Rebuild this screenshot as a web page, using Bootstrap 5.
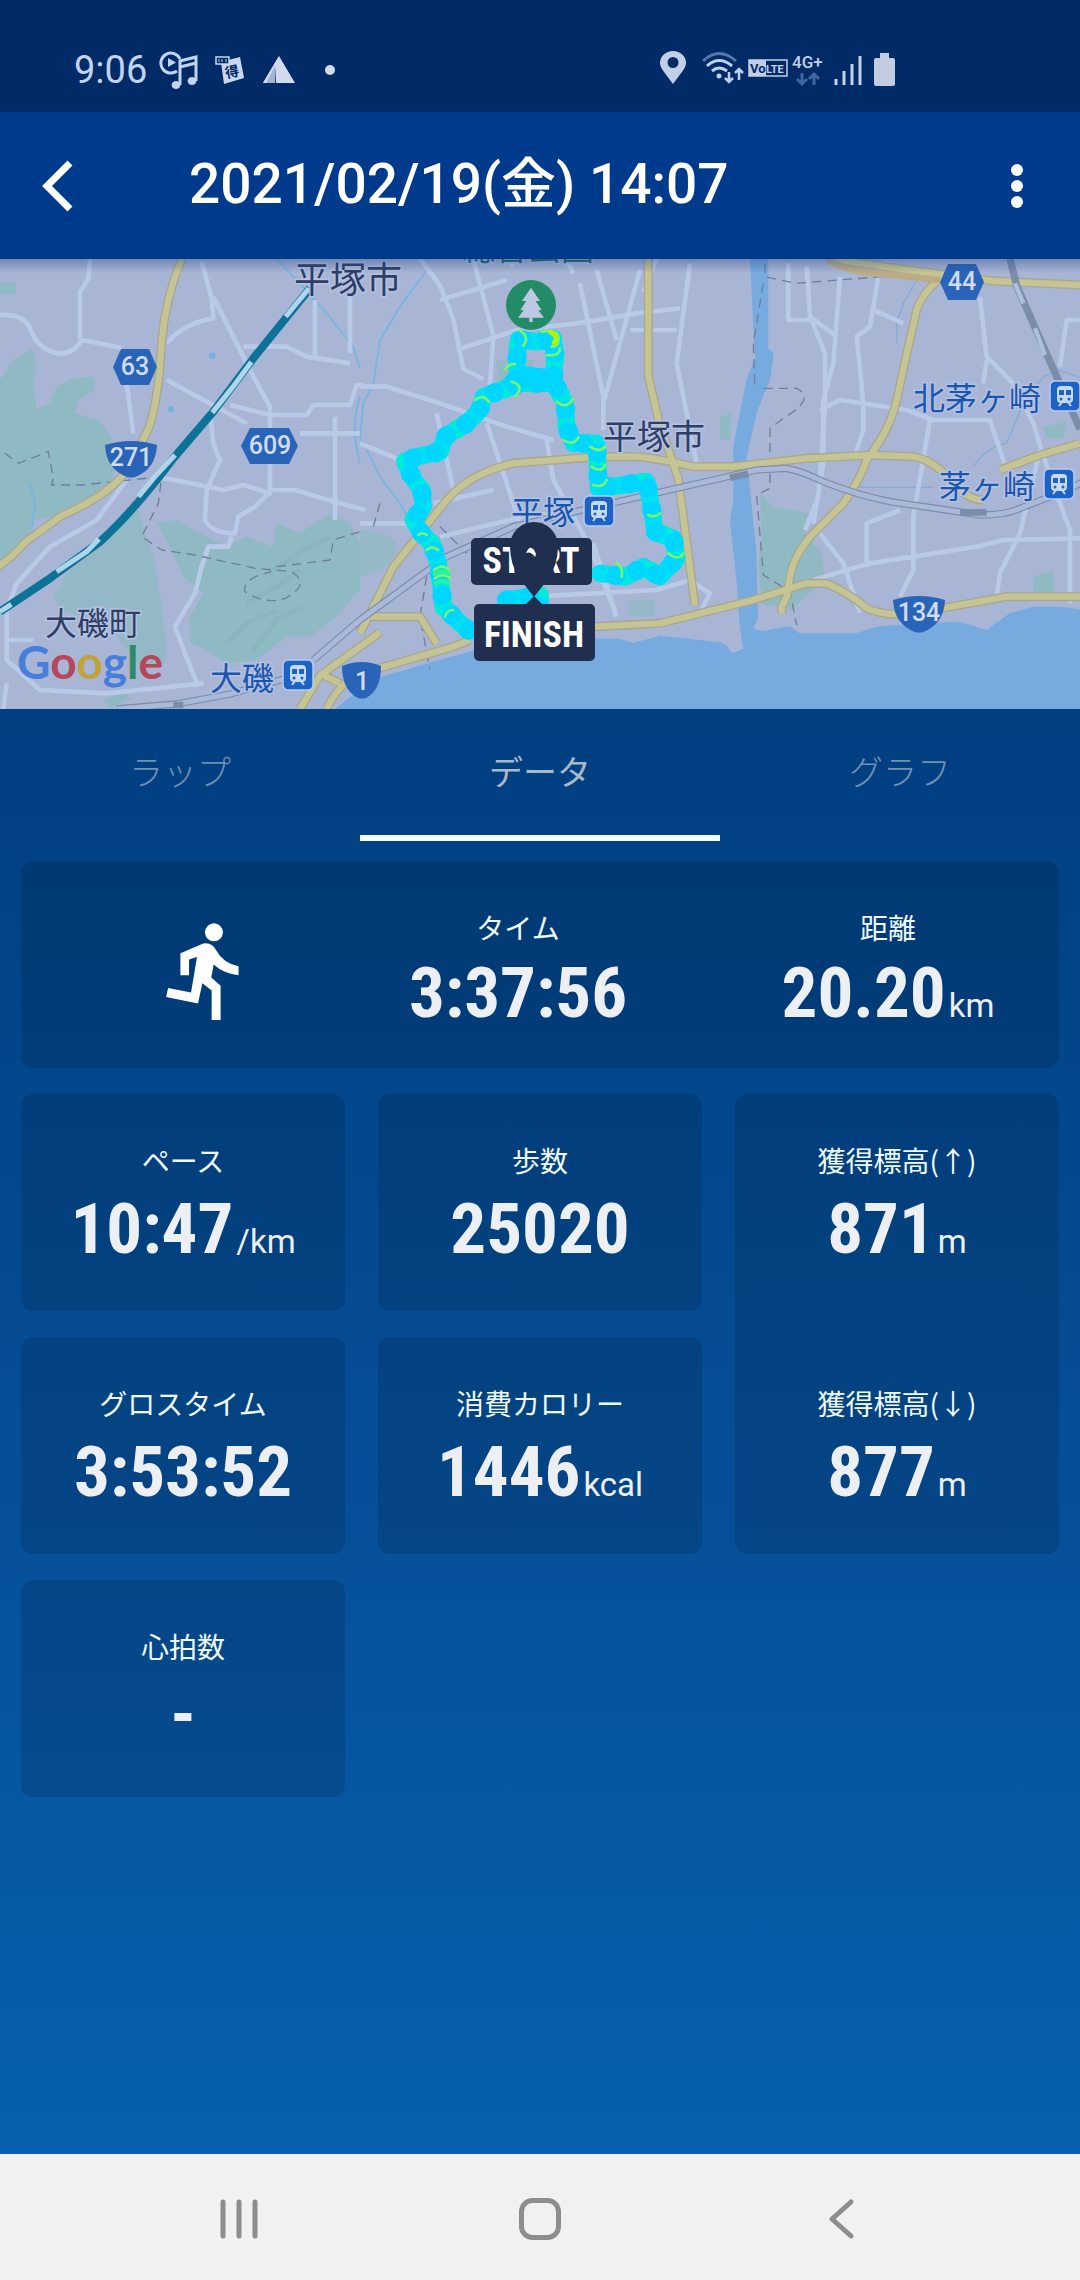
<!DOCTYPE html>
<html lang="ja">
<head>
<meta charset="utf-8">
<meta name="viewport" content="width=device-width, initial-scale=1">
<title>2021/02/19(金) 14:07</title>
<link rel="stylesheet" href="https://cdn.jsdelivr.net/npm/bootstrap@5.3.0/dist/css/bootstrap.min.css">
<style>
  :root { --num-font: "Roboto Condensed", Roboto, "Liberation Sans Narrow", sans-serif; }
  body { font-family: Roboto, "Noto Sans CJK JP", sans-serif; background: #075fae; color: #fff; }
  svg { display: block; }
  .app { min-height: 100vh; background: linear-gradient(#003f80 709px, #064f98 1500px, #0760ae 2154px); }
  .status-bar { height: 112px; padding: 48px 185px 0 74px; background: #002b66; color: #c3d3f2; }
  .clock { font-size: 38px; line-height: 44px; }
  .gap-before { margin-left: 12px; }
  .app-bar { height: 147px; padding: 0 42px; background: #003a8c; }
  .app-title { font-size: 55px; line-height: 72px; font-weight: 500; margin: 0 0 4px 116px; }
  .icon-btn { background: none; border: 0; padding: 0; color: inherit; }
  .route-map { height: 450px; overflow: hidden; background: #a8b5d5; }
  .route-map svg { width: 100%; height: 100%; }
  .road-sign { font: 500 25px Roboto, sans-serif; fill: #cfdcf4; text-anchor: middle; }
  .place { font-family: "Noto Sans CJK JP", sans-serif; fill: #303e63; stroke: #b4c2e4; stroke-width: 3px; paint-order: stroke; }
  .station { fill: #1a56ad; }
  .pin-label { font: 700 36px var(--num-font); font-stretch: condensed; fill: #fff; text-anchor: middle; }
  .tabs { height: 132px; }
  .tabs .nav-link { height: 132px; padding: 0 0 4px; background: none; border: 0; border-bottom: 6px solid transparent; border-radius: 0; font-size: 34px; font-weight: 300; color: #7190b3; font-family: "Noto Sans CJK JP", sans-serif; }
  .tabs .nav-link.active { color: #a9b8c9; border-bottom-color: #f4fcff; font-weight: 400; }
  .panels { display: grid; grid-template-columns: repeat(3, 1fr); gap: 26px 33px; padding: 20px 21px; }
  .panel { background: rgba(0, 16, 24, .15); border-radius: 12px; min-height: 217px; text-align: center; }
  .summary { grid-column: 1 / -1; min-height: 207px; display: grid; grid-template-columns: 362fr 270fr 406fr; }
  .summary .runner { padding-top: 61px; }
  .summary .distance { padding-left: 64px; }
  .elevation { grid-column: 3; grid-row: 2 / span 2; display: grid; grid-template-rows: 243px 1fr; }
  .metric { padding-top: 48px; }
  .metric dt { font: 400 28px/36px "Noto Sans CJK JP", sans-serif; color: #f0fbff; margin-bottom: 12px; }
  .panel.metric dt, .elevation dt { margin-bottom: 15px; }
  .metric dd { font: 700 71px/72px var(--num-font); font-stretch: condensed; color: #eceff4; margin: 0; }
  .unit { font: 400 33px Roboto, sans-serif; margin-left: 3px; }
  .system-nav { height: 126px; padding: 4px 88px 0; background: #f1f1f1; color: #8d8d8d; }
</style>
<script src="https://cdn.jsdelivr.net/npm/bootstrap@5.3.0/dist/js/bootstrap.bundle.min.js"></script>
</head>
<body>
<div class="app d-flex flex-column">
  <div class="status-bar d-flex align-items-start justify-content-between">
    <div class="d-flex align-items-center">
      <span class="clock">9:06</span>
      <svg class="gap-before" width="40" height="40" viewBox="0 0 40 40" fill="none" stroke="currentColor" stroke-width="3"><path d="M18 21A10 10 0 1 1 21 9"/><path d="M9 8l8 4.500-8 4.500z" fill="currentColor" stroke="none"/><path d="M21 35V11l16-4v24M21 17l16-4" /><ellipse cx="17" cy="35" rx="4" ry="3.500" fill="currentColor" stroke-width="1"/><ellipse cx="33" cy="31" rx="4" ry="3.500" fill="currentColor" stroke-width="1"/></svg>
      <svg class="ms-3" width="30" height="30" viewBox="0 0 30 30"><path d="M6 7l19-5 4 21-20 6z" fill="#cbd6ec"/><path d="M1 2h13v7H1z" fill="#002b66" stroke="#cbd6ec" stroke-width="1.500"/><path d="M4 4v3M7 4v3M11 4v3" stroke="#cbd6ec"/><text x="17" y="22" font-size="14" font-weight="700" font-family="Noto Sans CJK JP, sans-serif" text-anchor="middle" fill="#002b66" transform="rotate(-12 17 17)">得</text></svg>
      <svg class="ms-3" width="36" height="34" viewBox="0 0 36 34"><path d="M18 3l16 27H15l-1-17L6 30H2z" fill="#d2dbed"/><path d="M18 3L2 30h4l8-17z" fill="#d2dbed"/><path d="M5 30l9-17v17z" fill="#a4b5d4"/></svg>
      <svg class="ms-4" width="16" height="12" viewBox="0 0 16 12"><circle cx="9" cy="6" r="5" fill="#d2dbed"/></svg>
    </div>
    <div class="d-flex align-items-center">
      <svg width="26" height="44" viewBox="0 5 26 44"><path d="M13 41C5 30 0 25 0 20a13 12 0 0 1 26 0c0 5-5 10-13 21zM13 14a5 5 0 1 0 0 11 5 5 0 0 0 0-11z" fill="#c3cfe6" fill-rule="evenodd"/></svg>
      <svg class="ms-3" width="42" height="44" viewBox="0 5 42 44" fill="none" stroke="#bdd0f0" stroke-width="3"><path d="M1 18q16-15 33 0" stroke="#5776a9"/><path d="M5 23q12-11 25 0M10 28q7-6 15 0"/><circle cx="17" cy="33" r="2.500" fill="#bdd0f0" stroke="none"/><path d="M27 29v10m-4-4l4 4 4-4M37 37V26m-4 4l4-4 4 4" stroke-width="2.500"/></svg>
      <svg class="ms-1" width="40" height="44" viewBox="0 5 40 44"><rect x="1" y="17" width="38" height="16" fill="none" stroke="#c3cfe6" stroke-width="1.500"/><path d="M1 17h17v16H1z" fill="#c3cfe6"/><text x="2" y="30" font-family="Roboto, sans-serif" font-size="13" font-weight="700" fill="#002b66">Vo</text><text x="18" y="30" font-family="Roboto, sans-serif" font-size="11" font-weight="700" fill="#c3cfe6">LTE</text></svg>
      <svg class="ms-1" width="34" height="44" viewBox="0 5 34 44"><text x="0" y="25" font-family="Roboto, sans-serif" font-size="17" font-weight="500" fill="#c3cfe6">4G+</text><path d="M10 30v11m-5-5l5 5 5-5M22 42V31m-5 5l5-5 5 5" fill="none" stroke="#42659b" stroke-width="3"/></svg>
      <svg class="ms-2" width="28" height="44" viewBox="0 5 28 44" fill="none" stroke="#c3d0ea" stroke-width="3"><path d="M2 36v6M10 28v14M18 21v21M26 13v29"/></svg>
      <svg class="gap-before" width="21" height="44" viewBox="0 5 21 44"><path d="M6 10h9v5h4q2 0 2 2v24q0 2-2 2H2q-2 0-2-2V17q0-2 2-2h4z" fill="#c3cbe0"/></svg>
    </div>
  </div>

  <header class="app-bar d-flex align-items-center">
    <button class="icon-btn" type="button" aria-label="戻る"><svg width="31" height="52" viewBox="0 0 31 52" fill="none" stroke="currentColor" stroke-width="7"><path d="M28 3L5 26l23 23"/></svg></button>
    <h1 class="app-title">2021/02/19(金) 14:07</h1>
    <button class="icon-btn ms-auto" type="button" aria-label="メニュー"><svg width="42" height="52" viewBox="0 0 42 52" fill="currentColor"><circle cx="21" cy="10" r="6"/><circle cx="21" cy="26" r="6"/><circle cx="21" cy="42" r="6"/></svg></button>
  </header>

  <section class="route-map" aria-label="ルート">
    <svg viewBox="0 0 1080 450" preserveAspectRatio="xMidYMid slice">
      <defs>
        <linearGradient id="topShade" x2="0" y2="1"><stop stop-color="#24427e" stop-opacity=".4"/><stop offset="1" stop-color="#24427e" stop-opacity="0"/></linearGradient>
        <g id="train"><rect width="30" height="30" rx="5" fill="#1e62c6" stroke="#b4cdf5" stroke-width="1.500"/><rect x="7" y="5" width="16" height="17" rx="4" fill="#c6daf8"/><path d="M9 9h5v5H9zM16 9h5v5h-5z" fill="#1e62c6"/><circle cx="11" cy="18" r="1.500" fill="#1e62c6"/><circle cx="19" cy="18" r="1.500" fill="#1e62c6"/><path d="M9 25l3-4M21 25l-3-4" stroke="#c6daf8" stroke-width="2"/></g>
        <path id="yellowRoads" d="M545 27q-50 120-60 250-10 180-40 260l-60 120q-60 80-200 140l-110 80q-50 60-125 100M3240 105l-260-12-270-35-210-31M2840 70q-70 50-90 110-30 130-60 270-20 90-90 180-20 60-70 130l-100 100q-50 60-60 120l-10 60-15 30v20M1945 27v350l30 130 60 180 50 380M1080 1150l100-200 160-200q70-80 200-110l250-20h130q80 10 160 30h120l220-25 200-10 120 5q60 10 110 70t100 60M3000 660l120-45 120-35M1090 1100h170l50 80M1120 1260l240-70 50-20M1780 1130l200-10 280-70 160-50h60q70 30 120 75 60 25 140 15l280-50h220M900 1377l60-100 180-130M960 1270l60 30M980 1377q30-60 60-80"/>
        <path id="track" d="M440 1050l100-15v40M325 1140l-35-30-40-40-8-70-7-60-20-60-30-30-25-40 30-40-5-50-30-40-20-45 35-15 70-15 15-45 65-40 40-40 10-40 70-25 40-15h105l30 60 5 70 20 50h70l3 70 2 65 145-20 15 80 10 70 55 20 10 60-50 55-50-30-50 30-80-10M475 390l-5-50 5-72 55 7 50-10 5 55-5 70z"/>
      </defs>
      <!-- terrain and roads share a grid three times as fine as the label grid -->
      <g transform="translate(0 -9) scale(.33333)" fill="none" stroke-linejoin="round">
        <g fill="#90bac3">
          <path d="M0 95h48v38H0zM0 390l40-60 55-35 15 40-10 70 10 70 40-15 20-50 50-25 60-5 5 40-50 30-10 40 70 20 40 50-10 70 20 20-10 40-70 50-70 50-90 20-20 50-45 60-40 25z"/>
          <path d="M230 930l80-60 60-60 45-30 20 70 25 60 20 120 20 160-10 60-60 10-50-60-40-60-60-30-100-30-20-40z" opacity=".85"/>
          <path d="M470 820l60-10 90 50 60 30 60-30 80 30 10-70 70 30 90-60 60 30 30 60 0 140-70 80-80 60-70 0-90 70-90 10-60-40-50-20 0-80 40-70-60-50-40-90zM310 1350l60-25 20 20-60 30z"/>
          <path d="M1080 840q80 0 110 40-10 60-50 80l-60 20zM1885 1050h80v50h-80zM1490 330h110v60h-110z" opacity=".8"/>
          <path d="M2280 730l40 40 110 20-15 60 50 60 10 80-60 50-40 40-90-20-10-120 10-80zM2160 500l35-10-5 80h-30zM3100 980l60-20v70h-60zM3130 530l70-15-10 50h-50z"/>
        </g>
        <path d="M680 1180l60-60 90-40M760 1200l70-90 80-40M740 1060l90-50 70-50M820 960l90-60 80-40" stroke="#83afb8" stroke-width="14" opacity=".5"/>
        <path d="M2250 27h55v270l16 12-10 76-40 100-32 140 10 80 20 200 5 200-15 30 30 8 80-15 30 22h170l60-20 70-5 180-10 80 25 70-50 70-20h80l80 10v297H1005l75-60 60-35 170-50 110-30 360-37 80 2 40 12 80-22 180 20 40 20 30 0-10-60-10-140-20-180 10-70v-160l40-200 25-60z" fill="#77aadf"/>
        <path d="M2188 1170h30l4 30-25 10-15-20z" fill="#a8b5d5"/>
        <path d="M830 27l90 95 70 80 70 90 20 60M1280 60l-80 110-60 100-20 130-30 60-10 100 60 120 60 80 50 90M1080 440q-30 90 0 200M90 700l15 60-10 80" stroke="#7db4df" stroke-width="6"/>
        <path d="M2750 90l-40 70-20 60v60M2560 712h240M2920 650q40-60 100-70l50-120 60-80 50-18 60 20" stroke="#83acd9" stroke-width="4"/>
        <g stroke="#b9c9e8" stroke-width="14">
          <path d="M0 195q70-5 90 40 20 60 80 75 50 5 75-40 60 10 120 25M270 27l-5 60-25 40v140M380 400l20 150M500 280q50-60 140-75l-5-60-30-110M640 140l70 140 50 100 50 90v260l-80-25-60 15-120-25-60-10M730 290h130l60 30 130 20M945 150v170M1050 130v180M500 390l240 130M690 465l120 30h110l20-30h110l20-60h20M900 550h180M1005 500v310M630 480l10 100 20 50-40 90-5 90q20 40 90 40l10-50 50-30 50-50h70l100 30 110 30M695 860l-10 30h-60l-20 60-20 80-60 100 30 80 40 100M380 690l-90 120-140 80-100 110-30 80 0 150 100 90 200 10 290-30M20 1170h80M20 1300l-10 77"/>
          <path d="M1260 27l60 80 40 100 30 150 60 30M1320 150l200-60M1370 300l180-60 180-20 180-30 130-15M1420 27l60 230-10 150M1080 410h80l160 50 200 70 140 40M1310 490l50 230 20 30M1460 520l50 150 50 150 60 80M1640 570l20 120 110 200 80 210M1740 100l70 340v100M1790 60l60 210M1920 60l-110 400M2070 40l-40 300 60 300M1890 240h140M1970 27l-40 100M1720 70l-20-40M1540 50l-20-30M1080 580l120 50M1300 760l180-40M1320 860l250-60 180-20M1080 820h140M1600 1040l370-20 100-30 60 40-30 60M1850 1100l-70-220"/>
          <path d="M2365 40v170h70l40 100 0 160-20 270-40 100M2420 50l10 150 80 60M2520 80l-20 260-30 110v190l-30 180M2640 50l-30 180-40 30 20 200v80l-30 90M2460 480l60-30 200 30 80 30h170l50 150M2620 180l90 40M2790 510l-50 290v160l-40 80M2600 950v-130l100-40M2440 990l170-50 320-50 80-20 240-5M2940 140l20 180 80 80 60 120 50 160 60 160v220M2960 330l-10 70M3180 350l20-140h40M3120 600l-60 250-60 120-10 70M2460 850l70 90 50 150"/>
        </g>
        <g stroke="#6e7f9b" stroke-width="4" stroke-dasharray="28 18">
          <path d="M15 610l40 30 90-35 15 80-5 20 90 0 240-25-10 80-50 100 60 40 100 15 180 40 110 10q60 40-20 80-60 20-120-20-10-40 80-60M830 950l160-20 10-60 80-25"/>
          <path d="M2295 40v40l90 20 260-20 240-20M2290 100l-30 180 5 140M2290 415h100q60 30-40 90l-40 30v180l-40 20 20 240 80 50 20 100M1120 830l20-70M1320 830l80 80M1280 980l-20 120 30 160"/>
        </g>
        <use href="#yellowRoads" stroke="#aaa78c" stroke-width="27"/>
        <use href="#yellowRoads" stroke="#c5c494" stroke-width="19"/>
        <path d="M2480 27q60 40 170 45l170 18" stroke="#bdab86" stroke-width="20"/>
        <path d="M350 1377l180-15 160-30 180-50M940 1230l140-120 260-190 200-90 250-60 350-80 130-30 90-5q50 10 110 40 100 40 200 60l170 25 100 15q80 0 120-20l130-50 60-30M3030 27l20 80 70 160 120 270" stroke="#7c8cab" stroke-width="22"/>
        <path d="M350 1377l180-15 160-30 180-50M940 1230l140-120 260-190 200-90 250-60 350-80 130-30 90-5q50 10 110 40 100 40 200 60l170 25 100 15q80 0 120-20l130-50 60-30" stroke="#aab9d9" stroke-width="15"/>
        <path d="M3045 100l25 60M3105 235l30 80" stroke="#aec0df" stroke-width="13"/><path d="M2190 683l55-12M2880 787h80M520 1365h30" stroke="#7c8cab" stroke-width="20"/>
        <path d="M0 1085l150-100 150-110q100-90 220-250l120-140 120-160 170-210" stroke="#0d7297" stroke-width="24"/>
        <path d="M0 1085l34-22M170 965l90-60 37-38M415 740l50-60 60-65M637 488l60-75 57-77M857 200l70-85" stroke="#afd6ec" stroke-width="15"/>
        <g fill="#79afe0"><circle cx="637" cy="317" r="10"/><circle cx="513" cy="477" r="9"/></g>
        <g transform="translate(1080)" stroke-linecap="round">
          <circle cx="513" cy="165" r="75" fill="#238c66"/>
          <path d="M513 113l27 40h-13l18 28h-10l17 22h-34v13h-10v-13h-34l17-22h-10l18-28h-13z" fill="#bdc9e4"/>
          <use href="#track" stroke="#00e2f2" stroke-width="52"/>
          <use href="#track" stroke="#00ecda" stroke-width="56" stroke-dasharray="1 97"/>
          <use href="#track" stroke="#00d6ff" stroke-width="58" stroke-dasharray="1 67"/>
          <path d="M420 405q30-60 90-55l70 10 10 50-80-5-30 15z" fill="#00d6ff"/>
          <path d="M345 450q25-20 42 6M435 358q15-20 30-15M455 395q40 12 12 43M480 242q30 20 10 45M545 245q55-10 50 25 0 20-20 20M560 315q40 5 40-20M590 455q30 25 48-8M610 570q30 20 45-8M690 590q30 20 45 0M695 650q30 20 40-5M700 705q30 10 40-15M865 795q20 10 35-5M925 910q30 25 45 0M770 940q20 10 15 40M175 855q10-10 25 0M200 900q15-15 35 0M222 960q25-20 45 0M225 985q25-20 45 0M255 1100q5-20 25-20" stroke="#78f66a" stroke-width="8"/>
          <path d="M224 972q22-18 42 0M228 1000q20-14 38 0" stroke="#29f59a" stroke-width="12"/>
          <path d="M572 247q26 12 10 32" stroke="#b5f400" stroke-width="14"/>
        </g>
      </g>
      <g fill="#2964b8">
        <path d="M121 90h28l8 18-8 18h-28l-8-18zM250 169h39l9 18-9 18h-39l-9-18zM948 5h28l8 18-8 18h-28l-8-18z"/>
        <path d="M105 186q26-8 52 0-1 24-22 32-4 1-8 0-21-8-22-32zM893 341q26-8 52 0-1 24-22 32-4 1-8 0-21-8-22-32zM342 407q20-8 39 0 0 24-15 32-4 1-8 0-16-8-16-32z"/>
      </g>
      <g class="road-sign"><text x="135" y="116">63</text><text x="270" y="195">609</text><text x="962" y="31">44</text><text x="131" y="207">271</text><text x="919" y="362">134</text><text x="362" y="431">1</text></g>
      <g class="place">
        <text x="294" y="34" font-size="36">平塚市</text><text x="603" y="190" font-size="34">平塚市</text><text x="45" y="376" font-size="32">大磯町</text>
        <text x="462" y="1" font-size="33" style="fill:#1d6e66">総合公園</text>
        <g class="station" font-size="32"><text x="511" y="265">平塚</text><text x="210" y="431">大磯</text><text x="913" y="151">北茅ヶ崎</text><text x="939" y="239">茅ヶ崎</text></g>
      </g>
      <use href="#train" x="584" y="237"/><use href="#train" x="283" y="401"/><use href="#train" x="1050" y="122"/><use href="#train" x="1044" y="210"/>
      <text x="17" y="420" font-family="Lato, sans-serif" font-size="46" font-weight="700"><tspan fill="#487edb">G</tspan><tspan fill="#b7465b">o</tspan><tspan fill="#bfa33b">o</tspan><tspan fill="#487edb">g</tspan><tspan fill="#2e8b68">l</tspan><tspan fill="#b7465b">e</tspan></text>
      <rect x="471" y="279" width="121" height="47" rx="5" fill="#202f50"/>
      <text class="pin-label" x="531" y="314">START</text>
      <path d="M534 338l-14-18q-10-14-10-33a24 24 0 0 1 48 0q0 19-10 33z" fill="#202f50"/>
      <path d="M526 294q5-11 10 1l-1 3q-4-6-9-4z" fill="#fff"/>
      <path d="M534 337l9 9h-18z" fill="#202f50"/>
      <rect x="474" y="345" width="121" height="57" rx="5" fill="#202f50"/>
      <text class="pin-label" x="534" y="388">FINISH</text>
      <rect width="1080" height="14" fill="url(#topShade)"/>
    </svg>
  </section>

  <main class="flex-grow-1">
    <div class="tabs nav nav-justified" role="tablist">
      <button class="nav-link nav-item" type="button" role="tab" aria-selected="false">ラップ</button>
      <button class="nav-link nav-item active" type="button" role="tab" aria-selected="true">データ</button>
      <button class="nav-link nav-item" type="button" role="tab" aria-selected="false">グラフ</button>
    </div>
    <div class="panels">
      <div class="panel summary">
        <div class="runner"><svg class="mx-auto" width="75" height="99" viewBox="135 128 225 298" fill="#fff" aria-label="ランニング"><circle cx="282" cy="159" r="27"/><path d="M181 222L250 193Q275 188 288 212 310 252 356 261V288Q310 283 281 256L274 295 302 320V423H275V334L247 312 234 373 138 354 144 327 213 340 231 233 207 241V288H181z"/></svg></div>
        <dl class="metric mb-0"><dt>タイム</dt><dd>3:37:56</dd></dl>
        <dl class="metric distance mb-0"><dt>距離</dt><dd>20.20<span class="unit">km</span></dd></dl>
      </div>
      <dl class="panel metric mb-0"><dt>ペース</dt><dd>10:47<span class="unit">/km</span></dd></dl>
      <dl class="panel metric mb-0"><dt>歩数</dt><dd>25020</dd></dl>
      <div class="panel elevation">
        <dl class="metric mb-0"><dt>獲得標高(↑)</dt><dd>871<span class="unit">m</span></dd></dl>
        <dl class="metric mb-0"><dt>獲得標高(↓)</dt><dd>877<span class="unit">m</span></dd></dl>
      </div>
      <dl class="panel metric mb-0"><dt>グロスタイム</dt><dd>3:53:52</dd></dl>
      <dl class="panel metric mb-0"><dt>消費カロリー</dt><dd>1446<span class="unit">kcal</span></dd></dl>
      <dl class="panel metric mb-0"><dt>心拍数</dt><dd>-</dd></dl>
    </div>
  </main>

  <nav class="system-nav d-flex align-items-center" aria-label="システム">
    <button class="icon-btn flex-fill w-100" type="button" aria-label="履歴"><svg class="mx-auto" width="42" height="42" viewBox="0 0 42 42" stroke="currentColor" stroke-width="5" stroke-linecap="round"><path d="M5 4v34M21 4v34M37 4v34"/></svg></button>
    <button class="icon-btn flex-fill w-100" type="button" aria-label="ホーム"><svg class="mx-auto" width="42" height="42" viewBox="0 0 42 42" fill="none" stroke="currentColor" stroke-width="5"><rect x="2.500" y="2.500" width="37" height="37" rx="11"/></svg></button>
    <button class="icon-btn flex-fill w-100" type="button" aria-label="戻る"><svg class="mx-auto" width="42" height="42" viewBox="0 0 42 42" fill="none" stroke="currentColor" stroke-width="5" stroke-linecap="round" stroke-linejoin="round"><path d="M31 4L12 21l19 17"/></svg></button>
  </nav>
</div>
</body>
</html>
